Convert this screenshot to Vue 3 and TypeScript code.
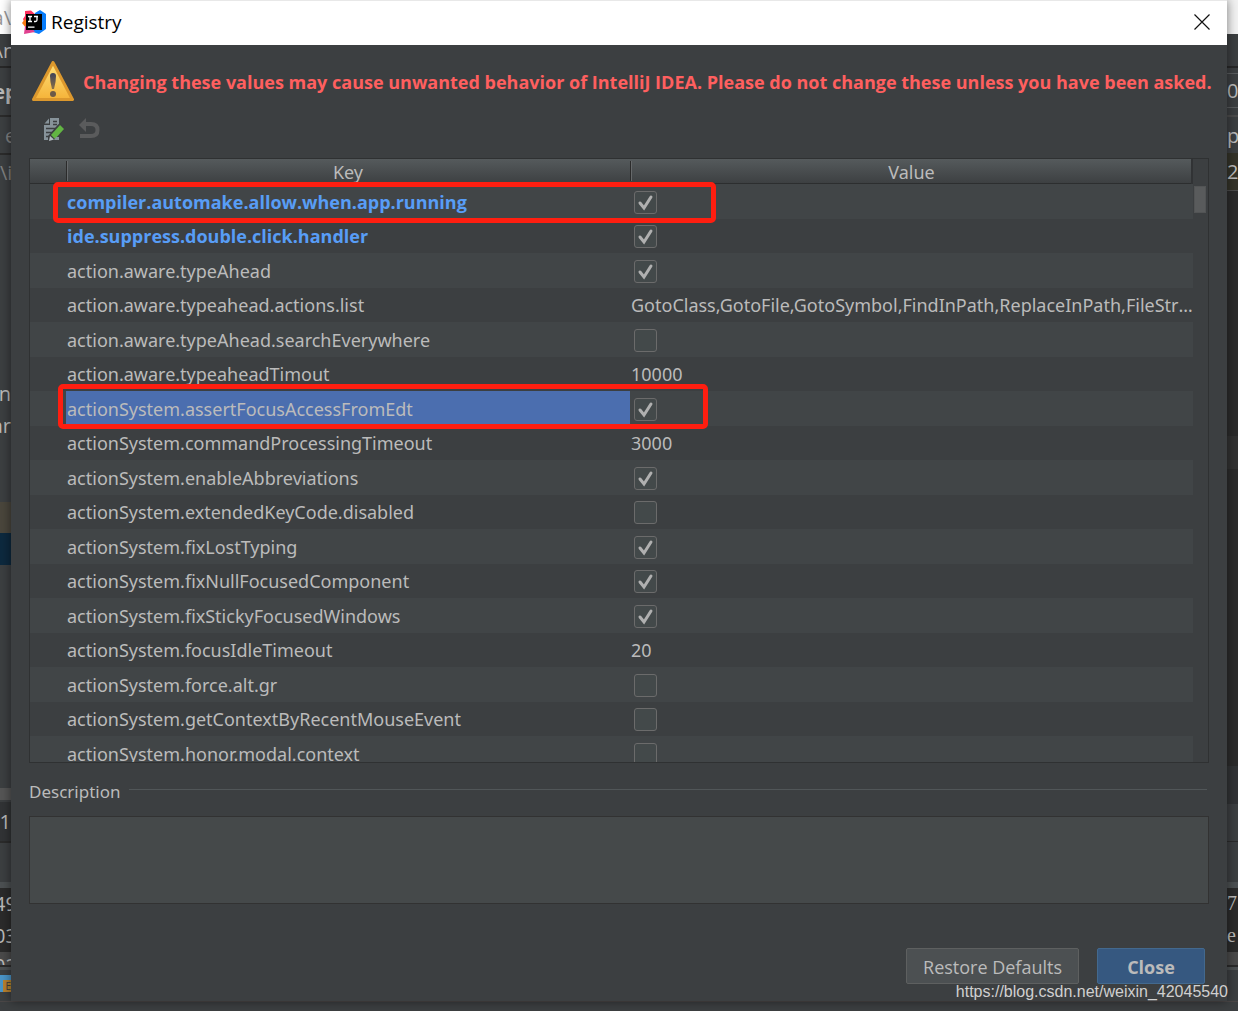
<script setup lang="ts">
import { ref } from 'vue'

interface Entry {
  key: string
  value: boolean | string
  changed?: boolean
  selected?: boolean
}

interface Segment {
  height: number
  color: string
  text?: string
  kind?: string
}

const entries = ref<Entry[]>([
  { key: 'compiler.automake.allow.when.app.running', value: true, changed: true },
  { key: 'ide.suppress.double.click.handler', value: true, changed: true },
  { key: 'action.aware.typeAhead', value: true },
  { key: 'action.aware.typeahead.actions.list', value: 'GotoClass,GotoFile,GotoSymbol,FindInPath,ReplaceInPath,FileStructurePopup' },
  { key: 'action.aware.typeAhead.searchEverywhere', value: false },
  { key: 'action.aware.typeaheadTimout', value: '10000' },
  { key: 'actionSystem.assertFocusAccessFromEdt', value: true, selected: true },
  { key: 'actionSystem.commandProcessingTimeout', value: '3000' },
  { key: 'actionSystem.enableAbbreviations', value: true },
  { key: 'actionSystem.extendedKeyCode.disabled', value: false },
  { key: 'actionSystem.fixLostTyping', value: true },
  { key: 'actionSystem.fixNullFocusedComponent', value: true },
  { key: 'actionSystem.fixStickyFocusedWindows', value: true },
  { key: 'actionSystem.focusIdleTimeout', value: '20' },
  { key: 'actionSystem.force.alt.gr', value: false },
  { key: 'actionSystem.getContextByRecentMouseEvent', value: false },
  { key: 'actionSystem.honor.modal.context', value: false },
])

const description = ref('')

// Slices of the IDE window that stay visible on either side of the dialog
const leftEdge: Segment[] = [
  { height: 34, color: '#ffffff', text: 'a\\', kind: 'title' },
  { height: 32, color: '#3c3f41', text: '\\n', kind: 'center' },
  { height: 2, color: '#282828' },
  { height: 47, color: '#3c3f41', text: 'ep', kind: 'bold' },
  { height: 2, color: '#2b2b2b' },
  { height: 36, color: '#3c3f41', text: 'e', kind: 'icon' },
  { height: 2, color: '#2b2b2b' },
  { height: 34, color: '#3c3f41', text: '\\id', kind: 'dim' },
  { height: 188, color: '#3c3f41' },
  { height: 32, color: '#3c3f41', text: 'n' },
  { height: 32, color: '#3c3f41', text: 'ar' },
  { height: 61, color: '#3c3f41' },
  { height: 31, color: '#4a463c' },
  { height: 32, color: '#0d293e' },
  { height: 223, color: '#3c3f41' },
  { height: 12, color: '#555555' },
  { height: 2, color: '#3c3f41' },
  { height: 39, color: '#313335', text: '01' },
  { height: 2, color: '#2b2b2b' },
  { height: 39, color: '#3c3f41' },
  { height: 6, color: '#4c5052' },
  { height: 30, color: '#2b2b2b', text: '49', kind: 'center' },
  { height: 34, color: '#2b2b2b', text: '03', kind: 'center' },
  { height: 13, color: '#4a4a4a', text: '02', kind: 'clipped' },
  { height: 2, color: '#2b2b2b' },
  { height: 3, color: '#4c5052' },
  { height: 5, color: '#3c3f41' },
  { height: 17, color: '#4a95c8', text: 'E', kind: 'badge' },
  { height: 8, color: '#3c3f41' },
]

const rightEdge: Segment[] = [
  { height: 34, color: '#f2f2f2' },
  { height: 32, color: '#3c3f41' },
  { height: 2, color: '#282828' },
  { height: 5, color: '#3c3f41' },
  { height: 1, color: '#5a5d5f' },
  { height: 33, color: '#3c3f41', text: '00' },
  { height: 1, color: '#5a5d5f' },
  { height: 7, color: '#3c3f41' },
  { height: 2, color: '#4c4c4c' },
  { height: 36, color: '#3c3f41', text: 'pa' },
  { height: 37, color: '#343329', text: '2.' },
  { height: 1, color: '#4c4c4c' },
  { height: 245, color: '#2b2b2b' },
  { height: 33, color: '#323232' },
  { height: 297, color: '#2b2b2b' },
  { height: 38, color: '#313335' },
  { height: 37, color: '#3c3f41' },
  { height: 1, color: '#2b2b2b' },
  { height: 40, color: '#3c3f41' },
  { height: 6, color: '#4c5052' },
  { height: 30, color: '#2b2b2b', text: '7', kind: 'serif' },
  { height: 34, color: '#2b2b2b', text: 'e', kind: 'serif' },
  { height: 13, color: '#4a4a4a' },
  { height: 2, color: '#2b2b2b' },
  { height: 3, color: '#4c5052' },
  { height: 30, color: '#3c3f41' },
]
</script>

<template>
  <div class="desktop">
    <div class="stage">
      <div class="edge edge-left" aria-hidden="true">
        <div
          v-for="(s, i) in leftEdge"
          :key="i"
          class="slice"
          :class="s.kind"
          :style="{ height: s.height + 'px', background: s.color }"
        ><span v-if="s.text">{{ s.text }}</span></div>
      </div>

      <main class="dialog" role="dialog" aria-labelledby="dialog-title">
        <header class="titlebar">
          <svg class="logo" viewBox="0 0 24 24" aria-hidden="true">
            <path d="M3 1 9 .5l5 4.500-6 8-5 1L1 9l2-3z" fill="#fe315d" />
            <path d="M0 13l3-4 4 5-3 4z" fill="#f97a12" />
            <path d="M13 3l5-3 6 4v15l-7 5-6-2z" fill="#087cfa" />
            <path d="M3 16l-1 8 11-2-5-6z" fill="#e0408f" />
            <path d="M4 4h16v16H4z" fill="#000" />
            <path d="M6 6.500h4M8 6.500v5M6 11.500h4M12 6.500h4M15 6.500v3.500q0 1.500-1.500 1.500H12M6 17.200h6.500" fill="none" stroke="#fff" stroke-width="1.300" />
          </svg>
          <h1 id="dialog-title">Registry</h1>
          <button class="window-close" type="button" aria-label="Close window">
            <svg viewBox="0 0 16 16" aria-hidden="true"><path d="M.5.5l15 15M15.500.5l-15 15" stroke="#111" stroke-width="1.200" /></svg>
          </button>
        </header>

        <div class="warning">
          <svg class="warning-icon" viewBox="0 0 42 41" aria-hidden="true">
            <defs>
              <linearGradient id="warn-fill" x1="0" y1="0" x2="0" y2="1">
                <stop offset="0" stop-color="#ffe07a" />
                <stop offset="1" stop-color="#f5b338" />
              </linearGradient>
              <linearGradient id="warn-mark" x1="0" y1="0" x2="0" y2="1">
                <stop offset="0" stop-color="#3f4258" />
                <stop offset="1" stop-color="#8a7048" />
              </linearGradient>
            </defs>
            <path d="M21 1.500 40.500 38.500h-39z" fill="url(#warn-fill)" stroke="#dc982d" stroke-width="3" stroke-linejoin="round" />
            <path d="M18 15q0-3 3-3t3 3q0 6-2 13h-2q-2-7-2-13z" fill="url(#warn-mark)" />
            <circle cx="21" cy="33" r="3" fill="#6d5a48" />
          </svg>
          <p>Changing these values may cause unwanted behavior of IntelliJ IDEA. Please do not change these unless you have been asked.</p>
        </div>

        <div class="toolbar">
          <button type="button" aria-label="Edit value">
            <svg viewBox="0 0 22 24" aria-hidden="true">
              <path d="M7 1h9v12l-6 6-1 4H1V8h6z" fill="#87939a" />
              <path d="M1.500 6.500 6 1.500v5z" fill="#87939a" />
              <path d="M10 4.500h4M10 7.500h4M3 11.500h10M3 15.500h8M3 19.500h5" stroke="#3c3f41" stroke-width="1.500" />
              <path d="M15.500 7 21 12.500 10.500 23H5v-4z" fill="#3c3f41" />
              <path d="M17 8l4 4-9 10-4-4z" fill="#62b543" />
              <path d="M7 19l4 3.500-5 1.500z" fill="#b4bcc1" />
              <path d="M13 20h3v3h-5z" fill="#87939a" />
            </svg>
          </button>
          <button type="button" aria-label="Revert to default" disabled>
            <svg viewBox="0 0 22 24" aria-hidden="true">
              <path d="M0 8 7 1v14z" fill="#5a5b5c" />
              <path d="M6 7h6q6.500 0 6.500 6T12 19H1" fill="none" stroke="#5a5b5c" stroke-width="4" />
            </svg>
          </button>
        </div>

        <div class="registry">
          <div class="table-area">
            <table>
              <colgroup>
                <col class="col-gutter" />
                <col class="col-key" />
                <col />
              </colgroup>
              <thead>
                <tr>
                  <td></td>
                  <th scope="col">Key</th>
                  <th scope="col">Value</th>
                </tr>
              </thead>
              <tbody>
                <tr v-for="e in entries" :key="e.key" :class="{ changed: e.changed, selected: e.selected }">
                  <td></td>
                  <td class="key">{{ e.key }}</td>
                  <td class="value">
                    <input v-if="typeof e.value === 'boolean'" v-model="e.value" type="checkbox" :aria-label="e.key" />
                    <template v-else>{{ e.value }}</template>
                  </td>
                </tr>
              </tbody>
            </table>
          </div>
          <div class="scrollbar"><div class="thumb"></div></div>
          <div class="marker marker-automake"></div>
          <div class="marker marker-focus"></div>
        </div>

        <div class="description-head">
          <label for="description">Description</label>
          <span class="rule"></span>
        </div>
        <textarea id="description" v-model="description" readonly></textarea>

        <footer class="actions">
          <button type="button" class="action">Restore Defaults</button>
          <button type="button" class="action primary">Close</button>
        </footer>
        <a class="watermark" href="https://blog.csdn.net/weixin_42045540">https://blog.csdn.net/weixin_42045540</a>
      </main>

      <div class="edge edge-right" aria-hidden="true">
        <div
          v-for="(s, i) in rightEdge"
          :key="i"
          class="slice"
          :class="s.kind"
          :style="{ height: s.height + 'px', background: s.color }"
        ><span v-if="s.text">{{ s.text }}</span></div>
      </div>
    </div>
    <div class="statusbar"></div>
  </div>
</template>

<style>
body {
  margin: 0;
  background: #3c3f41;
}
</style>

<style scoped>
.desktop {
  font-family: "Open Sans", "Noto Sans", sans-serif;
  font-size: 18px;
  color: #bbbbbb;
  overflow: hidden;
}

.desktop * {
  box-sizing: border-box;
}

.stage {
  display: flex;
}

.statusbar {
  height: 10px;
  background: #3c3f41;
  border-top: 1px solid #4b4747;
}

.edge {
  width: 11px;
  flex: none;
  overflow: hidden;
}

.slice {
  display: flex;
  align-items: center;
  overflow: hidden;
  white-space: nowrap;
  font-size: 20px;
}

.edge-left .slice {
  justify-content: flex-end;
}

.edge-left .slice.center,
.edge-left .slice.bold,
.edge-left .slice.clipped {
  justify-content: center;
}

.slice.clipped {
  align-items: flex-start;
}

.slice.title {
  color: #999999;
}

.slice.bold {
  font-weight: 700;
}

.slice.dim,
.slice.icon {
  color: #808080;
}

.edge-left .slice.dim,
.edge-left .slice.icon {
  justify-content: flex-start;
}

.edge-left .slice.icon {
  padding-left: 5px;
}

.slice.serif {
  font-family: "Liberation Serif", serif;
}

.slice.badge {
  align-items: flex-end;
}

.slice.badge span {
  padding-left: 2px;
  background: #b9822f;
  color: #3c3f41;
  font-size: 10px;
  line-height: 12px;
}

.dialog {
  position: relative;
  flex: 1;
  min-width: 0;
  background: #3c3f41;
  border-top: 1px solid #e8e8e8;
  box-shadow: 0 0 10px rgba(0, 0, 0, 0.5);
}

.titlebar {
  display: flex;
  align-items: center;
  height: 44px;
  padding: 0 17px 2px 11px;
  background: #ffffff;
}

.logo {
  width: 24px;
  height: 24px;
}

h1 {
  flex: 1;
  margin: 0 0 0 5px;
  color: #000000;
  font-size: 19px;
  font-weight: 400;
}

button {
  font: inherit;
  color: inherit;
}

.window-close {
  display: flex;
  padding: 0;
  border: 0;
  background: none;
}

.window-close svg {
  width: 16px;
  height: 16px;
}

.warning {
  display: flex;
  align-items: center;
  gap: 9px;
  height: 41px;
  margin: 16px 0 0 21px;
}

.warning-icon {
  flex: none;
  width: 42px;
  height: 41px;
}

.warning p {
  margin: 0;
  color: #ff5f5f;
  font-weight: 700;
  font-size: 18px;
  white-space: nowrap;
}

.toolbar {
  display: flex;
  gap: 14px;
  padding: 15px 0 17px 32px;
}

.toolbar button {
  display: flex;
  padding: 0;
  border: 0;
  background: none;
}

.toolbar svg {
  width: 22px;
  height: 24px;
}

.registry {
  position: relative;
  display: flex;
  height: 605px;
  margin: 0 18px;
  border: 1px solid #2f3132;
}

.table-area {
  flex: 1;
  min-width: 0;
  overflow: hidden;
}

table {
  width: 100%;
  table-layout: fixed;
  border-collapse: collapse;
  font-family: "Noto Sans", "Open Sans", sans-serif;
}

.col-gutter {
  width: 36px;
}

.col-key {
  width: 564px;
}

td,
th {
  padding: 0;
  font-weight: 400;
}

thead tr {
  height: 25px;
  background: linear-gradient(#555a5c, #3c3f41);
  box-shadow: inset 0 -1px #2c2e2f;
}

thead th {
  padding-top: 1px;
  line-height: 24px;
  background: linear-gradient(90deg, #2b2b2b 1px, #66696b 1px, #66696b 2px, transparent 2px) 0 2px / 3px 20px no-repeat;
}

thead th:last-child {
  box-shadow: inset -2px 0 #313335;
}

tbody tr {
  height: 34px;
}

tbody tr:nth-child(odd) {
  height: 35px;
  background: #414547;
}

.key,
.value {
  overflow: hidden;
  white-space: nowrap;
  text-overflow: ellipsis;
  line-height: 34px;
}

.key {
  padding-left: 1px;
}

.value {
  padding-left: 1px;
}

.changed .key {
  color: #589df6;
  font-family: "Open Sans", "Noto Sans", sans-serif;
  font-weight: 700;
}

.selected .key {
  background: #4b6eaf;
}

input[type="checkbox"] {
  appearance: none;
  display: block;
  width: 23px;
  height: 23px;
  margin: 2px 0 0 3px;
  border: 1px solid #6b6b6b;
  border-radius: 3px;
  background: #43494a;
}

tr:nth-child(even) input[type="checkbox"] {
  margin-top: 1px;
}

input[type="checkbox"]:checked {
  background: #43494a url("data:image/svg+xml,%3Csvg xmlns='http://www.w3.org/2000/svg' viewBox='0 0 21 21'%3E%3Cpath d='M5 11l4 5 7-11' fill='none' stroke='%23b0b0b0' stroke-width='3' stroke-linecap='round'/%3E%3C/svg%3E") center / 21px 21px;
}

.scrollbar {
  width: 15px;
  padding: 27px 0 0 1px;
}

.thumb {
  width: 12px;
  height: 27px;
  background: #595b5c;
  border: 1px solid #525455;
}

.marker {
  position: absolute;
  border: 5px solid #ff1e10;
  border-radius: 5px;
  pointer-events: none;
}

.marker-automake {
  left: 23px;
  top: 23px;
  width: 663px;
  height: 41px;
}

.marker-focus {
  left: 28px;
  top: 225px;
  width: 650px;
  height: 45px;
}

.description-head {
  display: flex;
  align-items: flex-start;
  gap: 9px;
  height: 24px;
  margin: 17px 20px 0 18px;
  font-family: "Noto Sans", "Open Sans", sans-serif;
  font-size: 17px;
  line-height: 24px;
}

.rule {
  flex: 1;
  height: 1px;
  margin-top: 9px;
  background: #515658;
}

textarea {
  display: block;
  width: calc(100% - 36px);
  height: 88px;
  margin: 12px 18px 0;
  padding: 4px;
  border: 1px solid #323232;
  background: #45494a;
  color: inherit;
  font: inherit;
  resize: none;
  outline: none;
}

.actions {
  display: flex;
  justify-content: flex-end;
  gap: 18px;
  padding: 44px 22px 17px 0;
}

.action {
  height: 36px;
  padding: 2px 16px 0;
  border: 1px solid #5e6060;
  border-radius: 2px;
  background: #4c5052;
  font-size: 18px;
}

.action.primary {
  width: 108px;
  border-color: #43698e;
  background: #365880;
  font-weight: 700;
}

.watermark {
  position: absolute;
  right: -1px;
  bottom: 0;
  color: #d0d0d0;
  font-family: "Liberation Sans", Arial, sans-serif;
  font-size: 16px;
  line-height: 18px;
  text-decoration: none;
  white-space: nowrap;
}
</style>
